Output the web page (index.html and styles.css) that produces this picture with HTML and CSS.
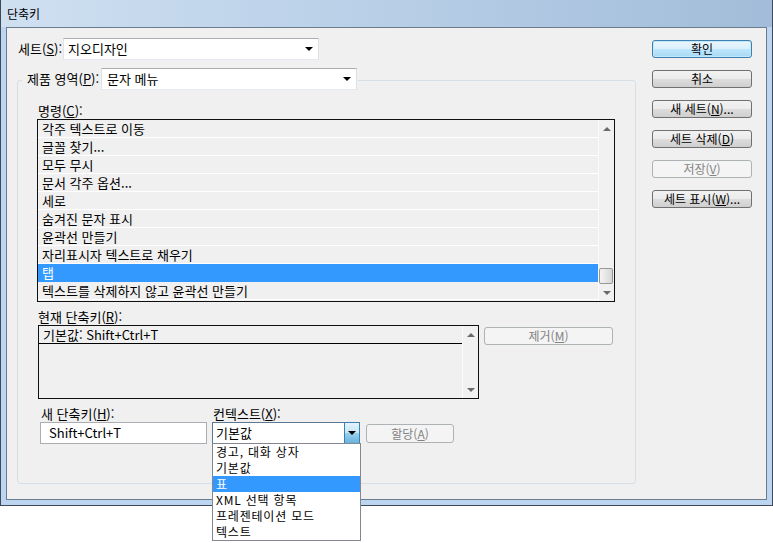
FILE: index.html
```html
<!DOCTYPE html>
<html lang="ko">
<head>
    <meta charset="UTF-8">
    <title>단축키</title>
    <link rel="stylesheet" href="styles.css">
</head>
<body>
    <div class="window">
        <div class="titlebar">단축키</div>
        <div class="client">
            <div class="main">
                <!-- Set selector -->
                <div class="set-row">
                    <span class="label">세트(<u>S</u>):</span>
                    <div class="combo set-combo"><span>지오디자인</span><i class="caret"></i></div>
                </div>

                <!-- Product area group -->
                <div class="group">
                    <div class="group-title">
                        <span class="label area-label">제품 영역(<u>P</u>):</span>
                        <div class="combo area-combo"><span>문자 메뉴</span><i class="caret"></i></div>
                    </div>
                    <div class="group-body">
                        <div class="field-label">명령(<u>C</u>):</div>
                        <div class="listbox commands">
                            <ul class="rows">
                                <li>각주 텍스트로 이동</li>
                                <li>글꼴 찾기...</li>
                                <li>모두 무시</li>
                                <li>문서 각주 옵션...</li>
                                <li>세로</li>
                                <li>숨겨진 문자 표시</li>
                                <li>윤곽선 만들기</li>
                                <li>자리표시자 텍스트로 채우기</li>
                                <li class="selected">탭</li>
                                <li>텍스트를 삭제하지 않고 윤곽선 만들기</li>
                            </ul>
                            <div class="scrollbar">
                                <span class="arrow up"></span>
                                <span class="track"><span class="thumb"></span></span>
                                <span class="arrow down"></span>
                            </div>
                        </div>

                        <div class="field-label spaced">현재 단축키(<u>R</u>):</div>
                        <div class="current-row">
                            <div class="listbox current">
                                <ul class="rows">
                                    <li>기본값: Shift+Ctrl+T</li>
                                </ul>
                                <div class="scrollbar">
                                    <span class="arrow up"></span>
                                    <span class="track"></span>
                                    <span class="arrow down"></span>
                                </div>
                            </div>
                            <button class="btn remove" disabled>제거(<u>M</u>)</button>
                        </div>

                        <div class="assign-row">
                            <div class="new-key">
                                <div class="field-label">새 단축키(<u>H</u>):</div>
                                <div class="textbox">Shift+Ctrl+T</div>
                            </div>
                            <div class="context">
                                <div class="field-label">컨텍스트(<u>X</u>):</div>
                                <div class="combo context-combo">
                                    <span>기본값</span>
                                    <span class="drop-btn"><i class="caret"></i></span>
                                    <ul class="popup">
                                        <li>경고, 대화 상자</li>
                                        <li>기본값</li>
                                        <li class="selected">표</li>
                                        <li>XML 선택 항목</li>
                                        <li>프레젠테이션 모드</li>
                                        <li>텍스트</li>
                                    </ul>
                                </div>
                            </div>
                            <button class="btn assign" disabled>할당(<u>A</u>)</button>
                        </div>
                    </div>
                </div>
            </div>

            <!-- Dialog buttons -->
            <div class="actions">
                <button class="btn default">확인</button>
                <button class="btn">취소</button>
                <button class="btn">새 세트(<u>N</u>)...</button>
                <button class="btn">세트 삭제(<u>D</u>)</button>
                <button class="btn" disabled>저장(<u>V</u>)</button>
                <button class="btn">세트 표시(<u>W</u>)...</button>
            </div>
        </div>
    </div>
</body>
</html>
```

FILE: styles.css
```css
body {
    margin: 0;
    min-height: 100vh;
    background: #fff;
    font-family: "Noto Sans CJK KR", sans-serif;
    font-size: 13px;
    color: #000;
}

ul {
    margin: 0;
    padding: 0;
    list-style: none;
}

/* Window frame */
.window {
    width: 773px;
    height: 506px;
    box-sizing: border-box;
    border: 1px solid #3e4a57;
    border-top: 0;
    padding: 0 5px 5px;
    background: #bcd6f1;
    display: flex;
    flex-direction: column;
}

.titlebar {
    height: 27px;
    margin: 0 -5px;
    padding-left: 6px;
    line-height: 27px;
    font-size: 12px;
    background: linear-gradient(to right, #cfe0f1 0%, #bcd2e9 40%, #a2bcd9 100%);
}

.client {
    flex: 1;
    display: flex;
    border: 1px solid #6c7c8c;
    background: #f0f0f0;
}

.main {
    width: 645px;
    padding-left: 10px;
    box-sizing: border-box;
}

.label {
    line-height: 16px;
    white-space: nowrap;
}

/* Combo boxes */
.combo {
    position: relative;
    display: flex;
    align-items: center;
    height: 22px;
    box-sizing: border-box;
    padding-left: 4px;
    border: 1px solid;
    border-color: #abadb3 #dbdfe6 #e3e9ef #e2e3ea;
    background: #fff;
    line-height: 20px;
    white-space: nowrap;
}

.caret {
    margin-left: auto;
    margin-right: 5px;
    width: 0;
    height: 0;
    border-top: 4px solid #000;
    border-left: 4px solid transparent;
    border-right: 4px solid transparent;
}

.set-row {
    display: flex;
    align-items: center;
    height: 22px;
    margin-top: 10px;
}

.set-row .label {
    width: 45px;
    padding-left: 1px;
}

.set-combo {
    width: 256px;
}

/* Product area group */
.group {
    width: 619px;
    box-sizing: border-box;
    margin-top: 20px;
    border: 1px solid #d5dfe5;
    border-radius: 3px;
}

.group-title {
    display: flex;
    align-items: center;
    width: max-content;
    margin: -13px 0 0 4px;
    padding: 0 1px 0 5px;
    background: #f0f0f0;
}

.area-label {
    width: 74px;
}

.area-combo {
    width: 256px;
    padding-left: 5px;
}

.group-body {
    padding: 13px 20px 39px 19px;
}

.field-label {
    height: 16px;
    line-height: 16px;
    padding-left: 1px;
    white-space: nowrap;
}

.field-label.spaced {
    margin-top: 7px;
}

/* List boxes */
.listbox {
    display: flex;
    box-sizing: border-box;
    border: 1px solid #101010;
    background: #f0f0f0;
}

.commands {
    height: 183px;
}

.rows {
    flex: 1;
}

.rows li {
    height: 18px;
    box-sizing: border-box;
    padding-left: 4px;
    border-bottom: 1px solid #fff;
    line-height: 17px;
    white-space: nowrap;
}

.rows li.selected {
    background: #3399ff;
    border-bottom-color: #3399ff;
    color: #fff;
}

.scrollbar {
    width: 16px;
    box-sizing: border-box;
    display: flex;
    flex-direction: column;
    border-left: 1px solid #fbfbfb;
    background: #f1f1f1;
}

.arrow {
    height: 17px;
    display: flex;
    align-items: center;
    justify-content: center;
}

.arrow::after {
    content: "";
    width: 0;
    height: 0;
    border-left: 4px solid transparent;
    border-right: 4px solid transparent;
}

.arrow.up::after {
    border-bottom: 4px solid #6a6a6a;
}

.arrow.down::after {
    border-top: 4px solid #6a6a6a;
}

.track {
    flex: 1;
    display: flex;
    flex-direction: column;
    justify-content: flex-end;
}

.thumb {
    height: 16px;
    margin: 0 1px 0 0;
    box-sizing: border-box;
    border: 1px solid #979797;
    border-radius: 2px;
    background: linear-gradient(to right, #f4f4f4, #e6e6e6 50%, #d6d6d6);
}

.current-row {
    display: flex;
    align-items: flex-start;
    gap: 5px;
    margin-left: 1px;
}

.current {
    width: 441px;
    height: 74px;
}

.current .rows li {
    border-bottom-color: #000;
}

/* Buttons */
.btn {
    height: 18px;
    padding: 0;
    box-sizing: border-box;
    border: 1px solid #707070;
    border-radius: 3px;
    background: linear-gradient(#f2f2f2 0%, #ebebeb 50%, #dddddd 51%, #cfcfcf 100%);
    font-family: inherit;
    font-size: 12px;
    line-height: 16px;
    color: #000;
    text-align: center;
    white-space: nowrap;
}

.btn.default {
    border-color: #3c7fb1;
    background: linear-gradient(#eaf6fd 0%, #d9f0fc 50%, #bee6fd 51%, #a7d9f5 100%);
    box-shadow: inset 0 0 0 1px #c5e7fb;
}

.btn:disabled {
    border-color: #adb2b5;
    background: #f4f4f4;
    color: #838383;
}

.remove {
    width: 129px;
    margin-top: 2px;
}

/* Assign row */
.assign-row {
    display: flex;
    align-items: flex-end;
    margin-top: 7px;
    margin-left: 3px;
}

.new-key {
    width: 167px;
}

.textbox {
    height: 22px;
    box-sizing: border-box;
    padding-left: 8px;
    border: 1px solid #abadb3;
    background: #fff;
    line-height: 20px;
}

.context {
    width: 148px;
    margin-left: 5px;
}

.context-combo {
    padding-left: 3px;
    border-color: #5b7895;
}

.drop-btn {
    margin: -1px -1px -1px auto;
    width: 16px;
    height: 22px;
    box-sizing: border-box;
    display: flex;
    align-items: center;
    justify-content: center;
    border: 1px solid #3c7fb1;
    background: linear-gradient(#e5f4fc 0%, #c4e5f6 50%, #98d1ef 51%, #68b3db 100%);
}

.drop-btn .caret {
    margin: 0;
}

.popup {
    position: absolute;
    top: 100%;
    left: -1px;
    z-index: 5;
    width: 149px;
    box-sizing: border-box;
    border: 1px solid #828790;
    background: #fff;
    font-size: 12px;
    letter-spacing: 0.8px;
}

.popup li {
    height: 16px;
    padding-left: 3px;
    line-height: 16px;
    white-space: nowrap;
}

.popup li.selected {
    background: #3399ff;
    color: #fff;
}

.assign {
    width: 88px;
    height: 19px;
    margin: 0 0 1px 6px;
}

/* Right column */
.actions {
    width: 100px;
    padding-top: 12px;
    display: flex;
    flex-direction: column;
    gap: 12px;
}
```
